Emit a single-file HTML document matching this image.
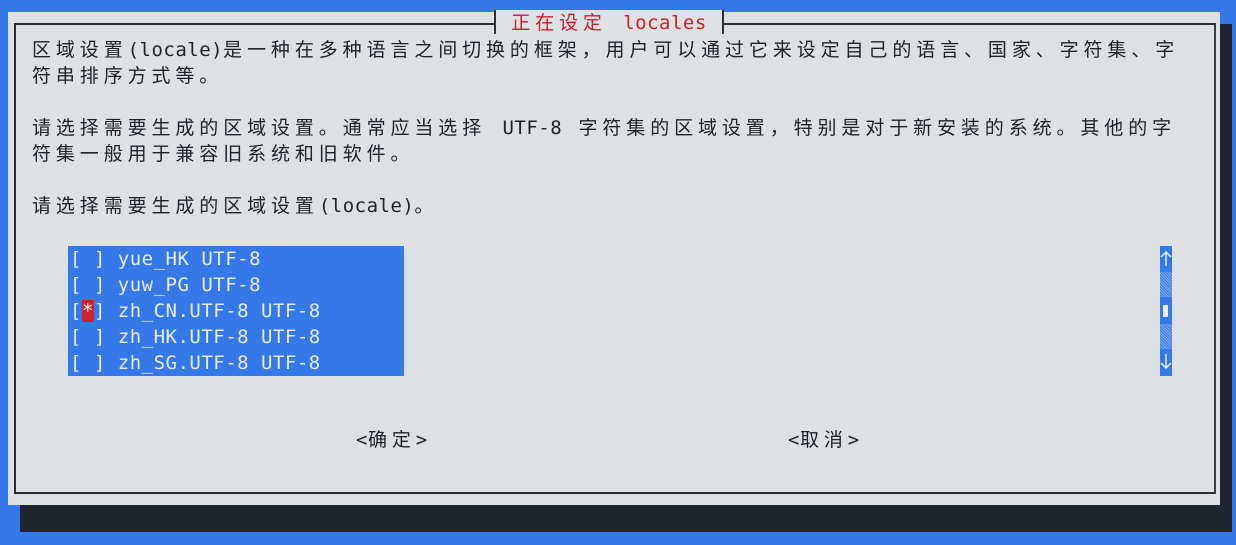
<!DOCTYPE html>
<html><head><meta charset="utf-8"><style>
body{margin:0;width:1236px;height:545px;background:#3579e8;position:relative;overflow:hidden;font-family:"DejaVu Sans Mono","Noto Sans CJK SC",monospace;font-size:19px;}
.sh{position:absolute;left:20px;top:24px;width:1212px;height:508px;background:#20252f;}
.dlg{position:absolute;left:8px;top:12px;width:1212px;height:493px;background:#dee1e4;}
.bd{position:absolute;left:14px;top:23px;width:1198px;height:467px;border:2px solid #2a2d33;border-right-color:#3a3d44;}
.t{position:absolute;white-space:pre;color:#1e2228;letter-spacing:4.9px;line-height:26px;}
.l{letter-spacing:0.5px}
.title{position:absolute;left:494px;top:10px;width:226px;height:24px;background:#dee1e4;border-left:2px solid #2a2d33;border-right:2px solid #2a2d33;color:#c8202a;line-height:26px;text-align:center;white-space:pre;letter-spacing:4.9px;}
.list{position:absolute;left:68px;top:246px;width:336px;height:130px;background:#3579e8;}
.row{position:absolute;left:2px;color:#e8ecf5;white-space:pre;line-height:26px;letter-spacing:0.5px}
.star{background:#d0202a;color:#fff;}
.sb{position:absolute;left:1160px;top:246px;width:12px;height:130px;background:#3579e8;}
.pat{position:absolute;left:0;width:12px;height:25px;background:repeating-linear-gradient(45deg,#7fa8ef 0 1px,#3579e8 1px 2px);}
</style></head><body>
<div class="sh"></div>
<div class="dlg"></div>
<div class="bd"></div>
<div class="title">正在设定 <span class="l">locales</span></div>
<div class="t" style="left:32px;top:37px">区域设置<span class="l">(locale)</span>是一种在多种语言之间切换的框架，用户可以通过它来设定自己的语言、国家、字符集、字</div>
<div class="t" style="left:32px;top:63px">符串排序方式等。</div>
<div class="t" style="left:32px;top:115px">请选择需要生成的区域设置。通常应当选择 <span class="l">UTF-8</span> 字符集的区域设置，特别是对于新安装的系统。其他的字</div>
<div class="t" style="left:32px;top:141px">符集一般用于兼容旧系统和旧软件。</div>
<div class="t" style="left:32px;top:193px">请选择需要生成的区域设置<span class="l">(locale)</span>。</div>
<div class="list">
<div class="row" style="top:0">[ ] yue_HK UTF-8</div>
<div class="row" style="top:26px">[ ] yuw_PG UTF-8</div>
<div class="row" style="top:52px">[<span class="star">*</span>] zh_CN.UTF-8 UTF-8</div>
<div class="row" style="top:78px">[ ] zh_HK.UTF-8 UTF-8</div>
<div class="row" style="top:104px">[ ] zh_SG.UTF-8 UTF-8</div>
</div>
<div class="sb">
<svg style="position:absolute;top:0;left:0" width="12" height="26"><path d="M6 6V20M1 11L6 6L11 11" stroke="#e8ecf5" stroke-width="1.5" fill="none"/></svg>
<div class="pat" style="top:26px"></div>
<div style="position:absolute;top:59px;left:3px;width:5px;height:12px;background:#e8ecf5"></div>
<div class="pat" style="top:78px"></div>
<svg style="position:absolute;top:104px;left:0" width="12" height="26"><path d="M6 4V18M1 13L6 18L11 13" stroke="#e8ecf5" stroke-width="1.5" fill="none"/></svg>
</div>
<div class="t" style="left:356px;top:427px"><span class="l">&lt;</span>确定<span class="l">&gt;</span></div>
<div class="t" style="left:788px;top:427px"><span class="l">&lt;</span>取消<span class="l">&gt;</span></div>
</body></html>
